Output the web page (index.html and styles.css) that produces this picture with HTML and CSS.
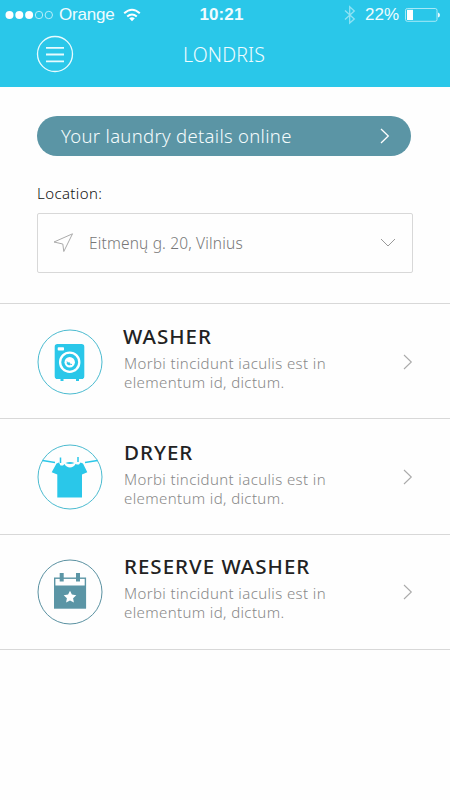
FILE: index.html
```html
<!DOCTYPE html>
<html lang="en">
<head>
<meta charset="utf-8">
<title>Londris</title>
<link rel="stylesheet" href="styles.css">
</head>
<body>
<header class="header">
  <div class="status">
    <div class="status-left">
      <svg class="signal" width="49" height="10" viewBox="0 0 49 10"><g fill="#fff"><circle cx="4.5" cy="5" r="4"/><circle cx="14.3" cy="5" r="4"/><circle cx="24.1" cy="5" r="4"/></g><g fill="none" stroke="#c5f2fa" stroke-width=".9"><circle cx="34" cy="5" r="3.7"/><circle cx="43.8" cy="5" r="3.7"/></g></svg>
      <span class="carrier">Orange</span>
      <svg class="wifi" width="18" height="14" viewBox="0 0 18 14"><g fill="none" stroke="#fff" stroke-width="2"><path d="M1.2 5.3Q9-1.8 16.8 5.3"/><path d="M4.2 8.6Q9 4.3 13.8 8.6"/></g><path fill="#fff" d="M6.2 10.3Q9 8.2 11.8 10.3L9 13.3Z"/></svg>
    </div>
    <span class="clock">10:21</span>
    <div class="status-right">
      <svg class="bluetooth" width="12" height="20" viewBox="0 0 12 20" fill="none" stroke="#8ee2f4" stroke-width="1.3"><path d="M1 5.5L10.3 14L5.7 18V1.8L10.3 6L1 14.5"/></svg>
      <span class="percent">22%</span>
      <svg class="battery" width="36" height="14" viewBox="0 0 36 14"><rect x=".5" y=".5" width="31.5" height="12.8" rx="1.8" fill="none" stroke="#b5edf8" stroke-width=".9"/><rect x="2" y="1.8" width="6" height="10.2" fill="#fff"/><path fill="#e8fbff" d="M33 4.5Q35 5 35 7T33 9.5Z"/></svg>
    </div>
  </div>
  <div class="nav">
    <svg class="menu" width="38" height="38" viewBox="0 0 38 38" fill="none" stroke="#e8fbfe"><circle cx="19" cy="19" r="17.5" stroke-width="1.3"/><path stroke-width="1.8" d="M10 12.8H28M10 19.5H28M10 26.3H28"/></svg>
    <h1 class="brand">LONDRIS</h1>
  </div>
</header>
<main>
  <section class="details">
    <a class="banner"><span class="banner-text">Your laundry details online</span>
      <svg width="10" height="16" viewBox="0 0 10 16" fill="none" stroke="#fff" stroke-width="1.3"><path d="M1 1L8.3 8L1 15"/></svg></a>
    <label class="label">Location:</label>
    <div class="select">
      <svg class="pin" width="21" height="20" viewBox="0 0 21 20" fill="none" stroke="#aaa" stroke-width="1"><path d="M19.5 .8L10.8 18.5L9.8 11L1 9Z"/></svg>
      <span class="address">Eitmenų g. 20, Vilnius</span>
      <svg width="16" height="10" viewBox="0 0 16 10" fill="none" stroke="#999" stroke-width="1"><path d="M1 1L8 8L15 1"/></svg>
    </div>
  </section>
  <section class="list">
    <a class="row row-washer">
      <svg class="icon" width="66" height="66" viewBox="0 .5 66 66"><circle cx="33" cy="33.500" r="32" fill="none" stroke="#4bbbd0"/><path fill="#2ac7e9" d="M20.500 15.500h24q2.800 0 2.800 2.800v29.400q0 2.800-2.800 2.800h-2.500v2h-3v-2H26.500v2h-3v-2h-3q-2.800 0-2.800-2.800v-29.400q0-2.800 2.800-2.800Z"/><rect x="20.700" y="18.800" width="6.300" height="3.300" rx=".8" fill="#fff"/><circle cx="32.700" cy="33.700" r="9.600" fill="none" stroke="#fff" stroke-width="2.300"/><circle cx="32.700" cy="33.700" r="5.200" fill="#fff"/><path d="M32.700 33.700V30.500Q35.800 31 36 33.700Z" fill="#2ac7e9" transform="rotate(170 32.700 33.700)"/><path fill="none" stroke="#2ac7e9" d="M30 33Q30.800 36 35 36"/></svg>
      <div class="copy"><h2 class="title">WASHER</h2><p class="text">Morbi tincidunt iaculis est in<br>elementum id, dictum.</p></div>
      <svg class="arrow" width="10" height="16" viewBox="0 0 10 16"><path d="M1 1L8.300 8L1 15"/></svg>
    </a>
    <a class="row row-dryer">
      <svg class="icon" width="66" height="66" viewBox="0 0 66 66"><circle cx="33" cy="33" r="32" fill="none" stroke="#4bbbd0"/><path fill="none" stroke="#2ac7e9" stroke-width="1.500" d="M5.500 16.500L18 18.400M48 18.400L60.500 16.500"/><path fill="#2ac7e9" d="M19.500 19.500L22 18.500L23.500 21.500H26L27.500 20C29.500 24.500 36.500 24.500 38.500 20L40 20.500H42L43.500 18.500L46 19.500L50.300 28.200L45 30.600V53.500H20.300V30.600L14.700 28.200Z"/><path fill="#2ac7e9" d="M28.500 19Q33 17 37.500 19Q33 21 28.500 19Z"/><path fill="none" stroke="#2ac7e9" stroke-width="1.500" d="M23.500 13.500V19M41 13V18"/></svg>
      <div class="copy"><h2 class="title">DRYER</h2><p class="text">Morbi tincidunt iaculis est in<br>elementum id, dictum.</p></div>
      <svg class="arrow" width="10" height="16" viewBox="0 0 10 16"><path d="M1 1L8.300 8L1 15"/></svg>
    </a>
    <a class="row row-reserve">
      <svg class="icon" width="66" height="66" viewBox="0 0 66 66"><circle cx="33" cy="33" r="32" fill="none" stroke="#5a91a1"/><rect x="17.700" y="19.200" width="30.700" height="29.500" fill="none" stroke="#5b95a5" stroke-width="1.400"/><path fill="#5b95a5" d="M17 26.500H49V49.500H17ZM22.700 14H26.700V22.500H22.700ZM39 14H43V22.500H39Z"/><path fill="#fff" d="M33 31.700L34.900 35.600L39.300 36.200L36.100 39.200L36.900 43.600L33 41.500L29.100 43.600L29.900 39.200L26.700 36.200L31.100 35.600Z"/></svg>
      <div class="copy"><h2 class="title">RESERVE WASHER</h2><p class="text">Morbi tincidunt iaculis est in<br>elementum id, dictum.</p></div>
      <svg class="arrow" width="10" height="16" viewBox="0 0 10 16"><path d="M1 1L8.300 8L1 15"/></svg>
    </a>
  </section>
</main>
</body>
</html>
```
FILE: styles.css
```css
* { box-sizing: border-box; }
body { margin: 0; height: 800px; background: #fefefe; font-family: "Noto Sans", "Open Sans", sans-serif; font-weight: 300; overflow: hidden; }
svg { display: block; flex: none; }
h1, h2, p { margin: 0; }
span, h1, h2, label { white-space: nowrap; }
.header { height: 87px; background: #2ac7e9; color: #effcff; }
.status { display: grid; grid-template-columns: 1fr auto 1fr; align-items: center; height: 30px; padding: 0 9px 0 5px; font-family: "Liberation Sans", sans-serif; font-weight: 400; font-size: 17px; }
.status-left, .status-right { display: flex; align-items: center; }
.status-right { justify-content: flex-end; }
.carrier { margin-left: 5px; letter-spacing: -.2px; }
.wifi { margin-left: 8px; }
.clock { margin-right: 3px; font-weight: 700; letter-spacing: .1px; }
.bluetooth { margin-right: 9px; }
.percent { margin-right: 6px; }
.nav { display: grid; grid-template-columns: 1fr auto 1fr; align-items: center; height: 48px; padding: 0 38px 0 36px; }
.brand { font-size: 19.5px; font-weight: 300; letter-spacing: .15px; }
.details { display: flex; flex-direction: column; height: 216px; padding: 29px 37px 0; }
.banner { display: flex; align-items: center; justify-content: space-between; height: 40px; width: 374px; padding: 0 21px 0 24px; border-radius: 20px; background: #5b95a5; color: #f5fcfd; font-size: 18.5px; letter-spacing: .3px; }
.banner-text { margin-top: -2px; }
.label { height: 24px; margin-top: 25px; color: #111; font-size: 15px; line-height: 24px; letter-spacing: .4px; }
.select { display: flex; align-items: center; height: 60px; margin-top: 8px; padding: 0 16px 0 15px; border: 1px solid #d8d8d8; border-radius: 2px; width: 376px; }
.address { flex: 1; margin-left: 15px; margin-top: -1px; color: #777; font-size: 15.5px; letter-spacing: .16px; }
.row { display: flex; align-items: flex-start; height: 116px; padding: 25px 37px 0; border-top: 1px solid #d8d8d8; }
.row-washer { height: 115px; }
.row-reserve { border-bottom: 1px solid #d8d8d8; padding-top: 24px; }
.copy { flex: 1; margin-left: 21px; }
.title { height: 24px; margin-top: -5px; color: #222; font-size: 20.5px; font-weight: 500; line-height: 24px; letter-spacing: 1px; }
.row-washer .title { margin-left: -1px; }
.row-dryer .title { margin-top: -4px; }
.text { margin-top: 6px; color: #888; font-size: 15px; line-height: 19px; letter-spacing: .38px; }
.arrow { margin-top: 25px; fill: none; stroke: #aaa; stroke-width: 1.1; }
```
